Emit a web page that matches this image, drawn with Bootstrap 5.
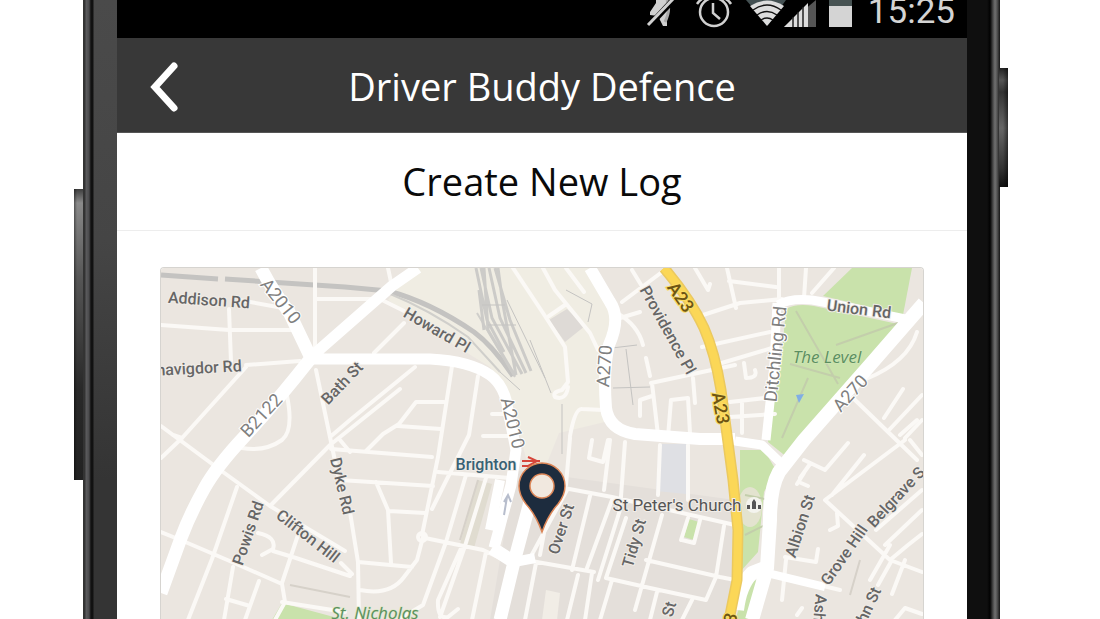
<!DOCTYPE html>
<html lang="en">
<head>
<meta charset="utf-8">
<meta name="viewport" content="width=device-width, initial-scale=1">
<title>Driver Buddy Defence</title>
<link href="https://cdn.jsdelivr.net/npm/bootstrap@5.3.0/dist/css/bootstrap.min.css" rel="stylesheet">
<style>
body { background: #fff; font-family: "Open Sans", "Noto Sans", sans-serif; color: #0a0a0a; overflow: hidden; }
.phone { margin: 0 100px 0 83px; }
.edge-left { width: 34px; background: linear-gradient(90deg, #333 0 2px, #5c5c5e 3px, #4a4a4c 6px, #111 8px 10px, transparent 11px), linear-gradient(#4a4a4a, #454545 240px, #343434 480px); }
.edge-right { width: 33px; background: linear-gradient(90deg, #0f0f0f 0 20px, #020202 23px, #4a4a4a 26px, #707070 28px, #555 30px, #151515 33px); }
.side-key { width: 9px; }
.key-left { top: 189px; left: -9px; height: 291px; background: linear-gradient(90deg, rgba(0,0,0,.4), transparent 3px), linear-gradient(#3d3d3d, #8a8a8a 14px, #555 90px, #292929 200px, #222); }
.key-right { top: 68px; right: -8px; height: 119px; background: linear-gradient(90deg, transparent 4px, rgba(0,0,0,.5)), linear-gradient(#222, #555 12px, #333 24px, #666 60px, #333 100px, #111); }
.status-bar { height: 38px; background: #000; color: #d4d4d4; font-family: Roboto, sans-serif; font-size: 35px; line-height: 24px; padding-right: 12px; }
.status-bar svg { height: 38px; width: 206px; }
.app-bar { height: 95px; background: #383838; color: #fff; border-bottom: 1px solid #555; padding-top: 2px; }
.app-title { font-size: 38px; line-height: 52px; }
.back-btn { left: 22px; width: 48px; height: 60px; }
.page-title { font-size: 38px; line-height: 52px; padding: 22px 0 23px; border-bottom: 1px solid #ededed; }
.map-wrap { padding: 36px 43px 0; }
.map-box { border: 1px solid #d6d4d0; border-bottom: 0; border-radius: 4px 4px 0 0; }
.map-box text { font-family: Roboto, "Open Sans", sans-serif; font-weight: 500; text-anchor: middle; dominant-baseline: central; fill: #666; font-size: 16px; paint-order: stroke; stroke: #f1ede8; stroke-width: 2px; }
.map-box .place { font-size: 17px; font-weight: 400; fill: #555; }
.map-box .station { fill: #386174; }
.map-box .route { fill: #808080; font-size: 18px; font-weight: 400; stroke: #fff; }
.map-box .gold { fill: #6d5514; font-size: 18px; stroke: #fbdc66; }
.map-box .park { fill: #5b8f60; font-style: italic; font-weight: 500; font-family: "Open Sans", sans-serif; font-size: 17px; stroke: #d3e6b9; stroke-width: 1px; }
</style>
</head>
<body>
<div class="phone position-relative d-flex min-vh-100">
  <div class="side-key key-left position-absolute"></div>
  <div class="side-key key-right position-absolute"></div>
  <div class="edge-left flex-shrink-0"></div>
  <main class="flex-grow-1 bg-white">
    <div class="status-bar d-flex justify-content-end align-items-start gap-3">
      <svg viewBox="647 0 206 38" aria-hidden="true">
        <path fill="#d0d0d0" d="M651 12 657 3V0h11v26h-4l-5-10-8-1z"/>
        <path d="M668 0q4 10-2 22" fill="none" stroke="#aaa" stroke-width="3"/>
        <path d="M648 28 678-4" stroke="#000" stroke-width="6"/>
        <path d="M649 25 675-2" stroke="#d0d0d0" stroke-width="3"/>
        <g fill="none" stroke="#d0d0d0" stroke-width="2.5"><circle cx="715" cy="12" r="14"/><path d="M714 3v10l7 6M698 4q4-6 10-7M722-3q7 2 10 7"/></g>
        <path d="M747 0h40l-18 25z" fill="#435052"/>
        <path d="M751 6q17-11 34 0l-17 20z" fill="#ddd"/>
        <path d="M754 10q14-10 28 0M758 15q10-7 20 0M762 20q6-4 12 0" fill="none" stroke="#111" stroke-width="1.5"/>
        <path d="M785 27 817 0v27z" fill="#555"/><path d="M785 27 809 3v24z" fill="#ddd"/>
        <path d="M794 17v10M799 12v15M804 7v20" stroke="#222" stroke-width="1.5"/>
        <path d="M830 0h23v27h-23z" fill="#465252"/><path d="M830 6h23v21h-23z" fill="#d4d4d4"/>
      </svg>
      <span>15:25</span>
    </div>
    <header class="app-bar position-relative d-flex align-items-center justify-content-center">
      <button type="button" class="back-btn btn p-0 border-0 position-absolute" aria-label="Back">
        <svg class="d-block" viewBox="0 0 48 60" width="48" height="60" fill="none" stroke="#fff" stroke-width="7" stroke-linecap="round"><path d="M35 10 16 31 35 52"/></svg>
      </button>
      <h1 class="app-title fw-normal m-0">Driver Buddy Defence</h1>
    </header>
    <h2 class="page-title fw-normal text-center m-0">Create New Log</h2>
    <div class="map-wrap">
      <div class="map-box overflow-hidden">
      <svg class="d-block w-100" viewBox="161 268 762 352" role="img" aria-label="Map of Brighton">
        <path fill="#ebe6e0" d="M161 268h762v352H161z"/>
        <path fill="#f0ede3" d="M415 268h180l20 45-7 60 1 48-50 12-24 60-13-50-12-48-20-28-60-37-42-30z"/>
        <path fill="#e4dfda" d="M515 470 735 500v120H490z"/>
        <path fill="#f1ede6" d="M546 590l14 3-3 27h-15z"/>
        <path fill="#dedad6" d="M567 309l18 17-20 16-16-22z"/>
        <path fill="#dfe0e4" d="M659 444h28l-1 50-30-3z"/>
        <path fill="#e0dcd0" d="M478 480 492 484 474 548 460 544z"/>
        <g fill="#c9e2ab">
          <path d="M852 268h60l-9 47-80-19z"/>
          <path d="M786 309q10-6 28-3l84 18-95 114-15 20-20-16 14-90z"/>
          <path d="M740 450h24l12 20-12 22-6 60-18 20z"/>
          <path d="M748 583l14-5-5 25-8 17h-14z"/>
          <path d="M689 519l10 3-5 18-10-3z"/>
          <path d="M282 603 345 620h-73z"/>
        </g>
        <ellipse cx="750" cy="507" rx="12" ry="20" fill="#e3e3cf"/>
        <g fill="none" stroke="#c3ceab" stroke-width="2"><path d="M796 311 838 384M898 323l-62 22M790 364l50 14M808 378l-26 60M745 495l25 5M745 535l20-10"/></g>
        <path fill="#80aee5" d="m796 395 8-1-5 9z"/>
        <!-- railway and platforms -->
        <g fill="none" stroke="#c4c3c1">
          <path stroke-width="5" d="M161 275 218 279M225 279 345 287 388 291Q430 302 474 332 493 346 513 376"/>
          <path stroke-width="2" d="M388 293Q430 310 468 337L500 372M477 313 515 377" stroke="#d0cfcb"/>
          <path stroke-width="3" stroke="#cccbc8" d="M476 268 487 320 504 352M481 268 492 318 522 374M489 268 500 318 526 373M495 268 510 320 531 371M484 268 488 330 515 376M498 268 503 305 516 375M479 290 484 330"/>
          <path stroke-width="1" d="M507 300 545 378M482 305h23M488 325h28M530 340 551 393M562 404v50M500 372 520 390M612 348 637 345M613 388 650 387M626 349 633 405M566 290 592 304 588 322"/>
        </g>
        <!-- minor streets -->
        <g fill="none" stroke="#fbf9f6" stroke-width="4" stroke-linecap="round" stroke-linejoin="round">
          <path d="M161 325 229 330H298M229 309 231 362M239 300 283 308M315 268v84M315 299h65L404 311M388 268 391 282M404 323 374 353M246 365 300 361M246 367 182 438 161 458M161 426 223 472 270 506 345 551M182 438 173 435M287 396Q294 430 282 440 265 452 242 448M316 370 330 437 340 485M330 437 350 420 415 367M270 506 330 445 400 389"/>
          <path d="M331 449 432 457M452 366 438 457 422 535M478 376 469 435 432 509M399 424 416 402H444M398 426 441 429M366 451 383 434 399 424M340 480 433 486M376 482 388 510 391 563M389 511 425 513M350 512 358 562 412 567M358 562 359 620M360 590Q390 596 404 577L417 560 423 537M425 538 483 550 500 558M438 472 510 478M466 475 446 542 423 605 398 620M486 478 465 546 440 617M486 552 472 620M462 546 438 600Q437 620 448 617L458 609M483 436H517M492 414H507"/>
          <circle cx="422" cy="537" r="4"/>
          <path d="M237 487 212 559 188 620M161 532 183 541 232 562 282 584 285 602M285 602 275 620M282 602 345 612M282 583 298 535M233 567 224 620M226 599 250 606M259 581 245 620M258 533Q277 537 273 549L262 555M273 551 296 558 350 576M341 563 352 574M340 440 350 452"/>
          <path d="M513 268 545 316 565 347 568 382 562 390M543 268 555 290 590 333 598 350M549 316 565 305M566 268 584 292M562 390q-10 2-7 7 11 4 13-10M570 436Q575 408 582 409L603 410M617 313Q638 325 643 345M620 318 640 312M622 302 662 272M632 270 643 288M646 358 650 376M651 383 735 365M652 383 658 435M640 416V400L652 396M668 437 671 400 688 398 690 433M693 378 695 403M700 316 740 303 782 299M702 347 770 332M715 365 772 348M695 268 708 290 710 284M727 268 736 308M729 281 776 287M806 268 804 298M834 268 812 293M779 268V302M774 397 730 402M775 414 730 417M744 363 746 378q12 0 9-8M742 403V433M917 332Q908 362 866 379M853 398 917 460M884 418 903 389M889 430 922 395M905 438 922 420"/>
          <path d="M625 442 620 510 598 580M660 445 658 495M688 445 688 500M610 440 604 490M592 440 589 458 603 462 608 440M570 438 566 485M548 485 612 497 735 525M567 490 530 558M590 496 572 570M612 500 587 568M626 518 606 578M662 515 635 610M646 560 720 577 735 580M606 578 650 588 706 600 716 577 724 526M681 540 688 518M682 540 694 543 700 520M514 558 594 572M578 575 567 620M592 573 585 620M612 580 600 620M657 592 650 620M692 600 682 620M536 563 525 620M540 555 550 500"/>
          <path d="M804 460 825 470M804 473 797 484M801 483l7 3M810 464 800 478M825 470 848 443M832 495 864 455M825 500 890 560 922 572M825 500 905 440M910 440 922 455M900 435 917 420M837 513 838 526 830 530M890 545 870 580M890 560 908 545 922 534M876 530 922 490M885 545 922 510M786 560 782 600M785 557 816 562 818 549M790 578 840 590M892 560 878 585M905 560 892 594M895 620 905 608 922 614M797 615 802 608"/>
        </g>
        <path d="M290 585 350 597M478 480 460 540M860 560 850 595" stroke="#d6d1c9" stroke-width="2" fill="none"/>
        <!-- main routes -->
        <g fill="none" stroke="#fff" stroke-linejoin="round">
          <path stroke-width="13" d="M261 268Q272 290 289 312L311 358Q274 405 244 437 216 467 204 489 190 514 181 538L161 593"/>
          <path stroke-width="11" d="M311 357 392 286 418 268M311 359 350 359 430 359Q470 361 490 375 505 386 508 410L516 450 511 485 494 548"/>
          <path stroke-width="13" d="M530 502 514 562 500 620M492 548 514 562"/>
          <path stroke-width="10" d="M514 562 535 558M500 480 490 530"/>
          <path stroke-width="12" d="M590 268 610 302Q621 318 609 345 603 368 606 408 609 430 635 434L700 439H735"/>
          <path stroke-width="9" d="M735 441 762 445 784 466M777 303 774 365 766 440M778 305Q794 296 823 302L910 320"/>
          <path stroke-width="14" d="M924 303 870 365 804 440 779 472Q770 488 770 520L767 568 752 620M767 567 752 573Q740 585 737 610"/>
          <path stroke-width="8" d="M767 573 825 587"/>
        </g>
        <path d="M664 268Q691 300 704 328 715 353 721 390L733 480 738 530 737 580 729 620" fill="none" stroke="#ebc95f" stroke-width="11"/>
        <path d="M664 268Q691 300 704 328 715 353 721 390L733 480 738 530 737 580 729 620" fill="none" stroke="#fbd757" stroke-width="8"/>
        <g>
          <text transform="translate(209 300) rotate(4)">Addison Rd</text>
          <text transform="translate(199 368) rotate(-3)">navigdor Rd</text>
          <text class="route" transform="translate(281 301) rotate(51)">A2010</text>
          <text class="route" transform="translate(261 415) rotate(-47)">B2122</text>
          <text transform="translate(342 383) rotate(-46)">Bath St</text>
          <text transform="translate(437 330) rotate(30)">Howard Pl</text>
          <text class="route" transform="translate(513 423) rotate(76)">A2010</text>
          <text class="route" transform="translate(604 366) rotate(-86)">A270</text>
          <text class="gold" transform="translate(681 297) rotate(55)">A23</text>
          <text class="gold" transform="translate(721 408) rotate(80)">A23</text>
          <text class="gold" transform="translate(728 629) rotate(-78)">A23</text>
          <text transform="translate(668 330) rotate(61)">Providence Pl</text>
          <text class="route" transform="translate(775 354) rotate(-84)">Ditchling Rd</text>
          <text transform="translate(859 309) rotate(7)">Union Rd</text>
          <text class="park" x="827" y="356">The Level</text>
          <text class="route" transform="translate(850 393) rotate(-48)">A270</text>
          <text transform="translate(342 486) rotate(77)">Dyke Rd</text>
          <text transform="translate(248 533) rotate(-71)">Powis Rd</text>
          <text transform="translate(308 536) rotate(38)">Clifton Hill</text>
          <text class="station" x="486" y="464">Brighton</text>
          <text transform="translate(561 529) rotate(-72)">Over St</text>
          <text transform="translate(634 543) rotate(-74)">Tidy St</text>
          <text transform="translate(669 609) rotate(-74)">St</text>
          <text class="place" x="677" y="505">St Peter's Church</text>
          <text transform="translate(800 526) rotate(-72)">Albion St</text>
          <text transform="translate(844 555) rotate(-55)">Grove Hill</text>
          <text transform="translate(896 497) rotate(-47)">Belgrave S</text>
          <text transform="translate(865 613) rotate(-65)">John St</text>
          <text transform="translate(820 608) rotate(95)">Ash</text>
          <text class="park" x="375" y="612">St. Nicholas</text>
        </g>
        <circle cx="754" cy="505" r="8" fill="#f4f4ee"/>
        <path d="M747 509v-4h3v4zm5 0v-7l2-3 2 3v7zm6 0v-4h3v4z" fill="#555"/>
        <path d="m504 515 3-18m-3 5 4-7 3 7" fill="none" stroke="#b7bdcc" stroke-width="2"/>
        <path d="M522 461h18M522 466h18m-12-9 9 4-9 5 9 4" fill="none" stroke="#d6463b" stroke-width="2"/>
        <path d="M542 532Q536 515 526 504 519 495 519 486A23 23 0 0 1 565 486Q565 495 558 504 548 515 542 532Z" fill="#1d2c3e" stroke="#dc8657" stroke-width="1.5"/>
        <circle cx="542" cy="486" r="12" fill="#f1e8df" stroke="#dc8657" stroke-width="1.5"/>
      </svg>
      </div>
    </div>
  </main>
  <div class="edge-right flex-shrink-0"></div>
</div>
<script src="https://cdn.jsdelivr.net/npm/bootstrap@5.3.0/dist/js/bootstrap.bundle.min.js"></script>
</body>
</html>
